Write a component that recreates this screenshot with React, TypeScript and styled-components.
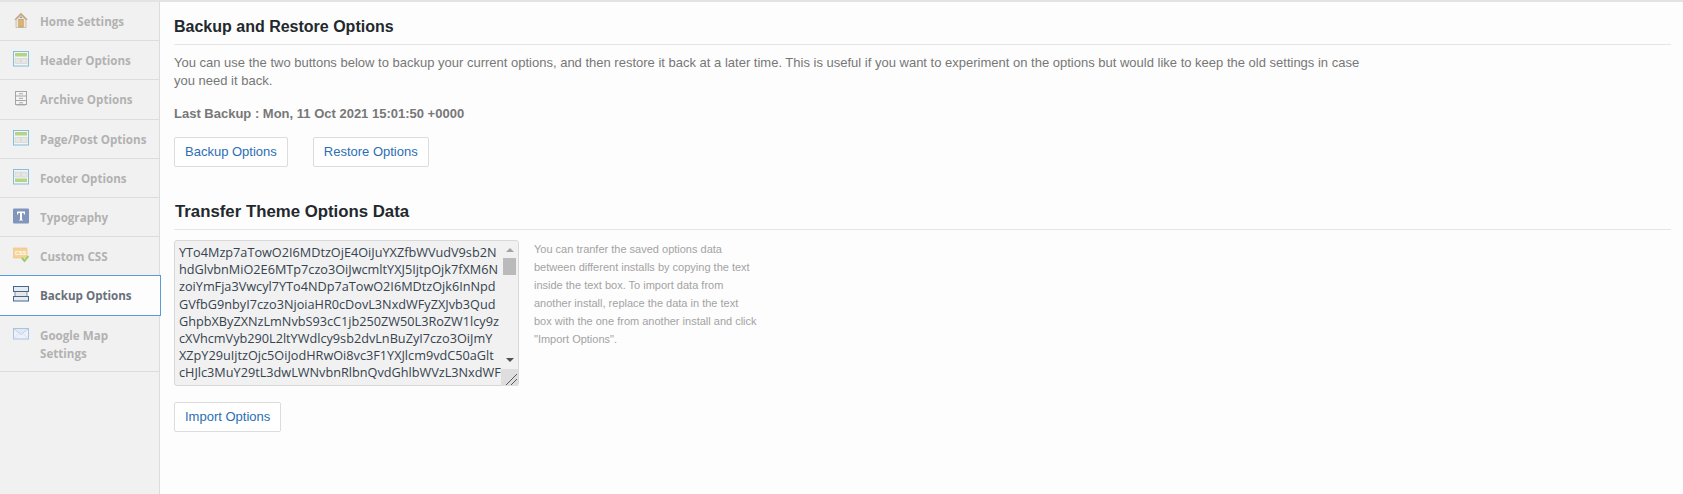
import React from "react";
import styled, { createGlobalStyle } from "styled-components";

const GlobalStyle = createGlobalStyle`
  html, body {
    margin: 0;
    padding: 0;
    background: #fdfdfd;
  }
  * {
    box-sizing: border-box;
  }
`;

const Page = styled.div`
  display: flex;
  width: 1683px;
  height: 494px;
  overflow: hidden;
  border-top: 2px solid #e3e3e3;
  font-family: "Liberation Sans", Arial, sans-serif;
`;

const Sidebar = styled.ul`
  flex: none;
  width: 160px;
  margin: 0;
  padding: 0;
  list-style: none;
  background: #f1f1f1;
  border-right: 1px solid #dcdcdc;
`;

const MenuItem = styled.li<{ $active?: boolean; $rows?: number }>`
  display: flex;
  align-items: flex-start;
  column-gap: 11px;
  min-height: ${(p) => p.$rows ?? 39}px;
  padding: 11px 0 0 13px;
  border-bottom: 1px solid #dcdcdc;
  font-family: "Open Sans", sans-serif;
  font-size: 11.6px;
  font-weight: 700;
  line-height: 18px;
  color: #b2b2b2;
  ${(p) =>
    p.$active &&
    `
    position: relative;
    width: 161px;
    margin-top: -1px;
    background: #fdfdfd;
    border: 1px solid #5b9bd5;
    border-left: 0;
    color: #69707c;
  `}
`;

const MenuIcon = styled.svg`
  flex: none;
  width: 16px;
  height: 16px;
  margin-top: -1px;
`;

const MenuLabel = styled.span`
  display: block;
  width: 116px;
`;

const Content = styled.main`
  flex: 1;
  padding: 15px 12px 0 14px;
`;

const SectionTitle = styled.h3`
  margin: 0;
  padding-bottom: 7px;
  border-bottom: 1px solid #e6e6e6;
  font-size: 16px;
  font-weight: 700;
  line-height: 20px;
  color: #23282d;
`;

const Intro = styled.p`
  width: 1205px;
  margin: 9px 0 0;
  font-size: 13px;
  line-height: 18px;
  color: #777;
`;

const LastBackup = styled.p`
  margin: 15px 0 0;
  font-size: 13px;
  font-weight: 700;
  line-height: 18px;
  color: #777;
`;

const ButtonRow = styled.div`
  display: flex;
  column-gap: 25px;
  margin-top: 14px;
`;

const ActionButton = styled.button`
  height: 30px;
  padding: 0 10px 2px;
  background: #fff;
  border: 1px solid #dcdcdc;
  border-radius: 2px;
  font-family: "Liberation Sans", Arial, sans-serif;
  font-size: 13px;
  color: #2b6eb4;
`;

const TransferTitle = styled(SectionTitle)`
  margin: 35px 0 0;
  padding-left: 1px;
  font-size: 16.8px;
`;

const TransferRow = styled.div`
  display: flex;
  column-gap: 15px;
  margin-top: 10px;
`;

const DataField = styled.div`
  position: relative;
  flex: none;
  width: 345px;
  height: 146px;
`;

const DataBox = styled.textarea`
  display: block;
  width: 100%;
  height: 100%;
  padding: 3px 4px 0;
  overflow: hidden;
  resize: none;
  white-space: pre;
  background: #f1f1f1;
  border: 1px solid #d8d8d8;
  border-radius: 3px;
  outline: none;
  font-family: "Open Sans", sans-serif;
  font-size: 12.7px;
  line-height: 17.2px;
  color: #35434f;
`;

const ScrollBar = styled.div`
  position: absolute;
  top: 1px;
  right: 1px;
  bottom: 1px;
  display: flex;
  flex-direction: column;
  align-items: center;
  width: 17px;
  background: #f1f1f1;
  border-radius: 0 2px 2px 0;
`;

const ArrowUp = styled.span`
  flex: none;
  margin-top: 7px;
  border-style: solid;
  border-width: 0 4px 4px;
  border-color: transparent transparent #a3a3a3;
`;

const Thumb = styled.span`
  flex: none;
  width: 13px;
  height: 17px;
  margin-top: 6px;
  background: #bababa;
`;

const ArrowDown = styled.span`
  flex: none;
  margin-top: 83px;
  border-style: solid;
  border-width: 4px 4px 0;
  border-color: #505050 transparent transparent;
`;

const ResizeCorner = styled.span`
  display: flex;
  flex: none;
  align-items: flex-end;
  justify-content: flex-end;
  width: 17px;
  height: 17px;
  margin-top: 7px;
  background: #dedede;
`;

const HelpText = styled.p`
  width: 224px;
  margin: 0;
  font-size: 11px;
  line-height: 18px;
  color: #a3a3a3;
`;

const ImportRow = styled.div`
  display: flex;
  margin-top: 16px;
`;

const exportedOptions = [
  "YTo4Mzp7aTowO2I6MDtzOjE4OiJuYXZfbWVudV9sb2N",
  "hdGlvbnMiO2E6MTp7czo3OiJwcmltYXJ5IjtpOjk7fXM6N",
  "zoiYmFja3Vwcyl7YTo4NDp7aTowO2I6MDtzOjk6InNpd",
  "GVfbG9nbyI7czo3NjoiaHR0cDovL3NxdWFyZXJvb3Qud",
  "GhpbXByZXNzLmNvbS93cC1jb250ZW50L3RoZW1lcy9z",
  "cXVhcmVyb290L2ltYWdlcy9sb2dvLnBuZyI7czo3OiJmY",
  "XZpY29uIjtzOjc5OiJodHRwOi8vc3F1YXJlcm9vdC50aGlt",
  "cHJlc3MuY29tL3dwLWNvbnRlbnQvdGhlbWVzL3NxdWF",
  "yZXJvb3QvaW1hZ2VzL2Zhdmljb24ucG5nIjtzOjk6ImZvb",
].join("\n");

const HomeIcon = () => (
  <MenuIcon viewBox="0 0 16 16">
    <path d="M3 15.500V8L8 3.200 13 8v7.500z" fill="#efe6d6" stroke="#bfb7aa" strokeWidth=".8" />
    <path d="M8 .8 1.500 7.200l.8 1L8 3l5.700 5.200.8-1z" fill="#c8a67a" />
    <rect x="5.800" y="7.500" width="4.400" height="7.500" fill="#dcb478" stroke="#b98f55" strokeWidth=".6" />
    <circle cx="8" cy="5.300" r=".9" fill="#5b8fc7" />
  </MenuIcon>
);

const LayoutIcon = ({ footer }: { footer?: boolean }) => (
  <MenuIcon viewBox="0 0 16 16">
    <rect x=".5" y=".5" width="15" height="14.500" fill="#f4f6f2" stroke="#86bcdc" />
    <rect x="2" y={footer ? 9.500 : 2} width="12" height="3.500" fill="#b4d488" />
    <rect x="2" y={footer ? 3 : 7.500} width="5.500" height="5" fill="#e6e6e6" stroke="#cfcfcf" strokeWidth=".6" />
    <rect x="8.500" y={footer ? 3 : 7.500} width="5.500" height="5" fill="#e6e6e6" stroke="#cfcfcf" strokeWidth=".6" />
  </MenuIcon>
);

const ArchiveIcon = () => (
  <MenuIcon viewBox="0 0 16 16">
    <rect x="2.500" y="1.500" width="11" height="13" fill="#f4f4f4" stroke="#a5a5a5" />
    <path d="M3 6h10M3 10.500h10" stroke="#a5a5a5" />
    <path d="M6 3.800h4M6 8.300h4M6 12.800h4" stroke="#a5a5a5" />
    <path d="M3.500 15.500h9" stroke="#d0d0d0" />
  </MenuIcon>
);

const TypeIcon = () => (
  <MenuIcon viewBox="0 0 16 16">
    <rect y=".5" width="16" height="15" rx="1" fill="#8295bd" />
    <path d="M4 3.500h8v3h-1l-.5-1.500H9v6.500l1 .5v.5H6V12l1-.5V5H5.500L5 6.500H4z" fill="#fff" />
  </MenuIcon>
);

const CssIcon = () => (
  <MenuIcon viewBox="0 0 16 16">
    <rect y="1" width="14" height="10" fill="#f5d295" stroke="#eec47f" strokeWidth=".6" />
    <text x="2" y="8.300" fontSize="5.500" fontWeight="700" fontFamily="Liberation Sans" fill="#fff">CSS</text>
    <path d="m9 11 2.500 3 4-5" fill="none" stroke="#9ccb6c" strokeWidth="2" />
  </MenuIcon>
);

const BackupIcon = () => (
  <MenuIcon viewBox="0 0 16 16">
    <rect x="2" y="5" width="12" height="6" fill="#e6e6e6" stroke="#8090a4" />
    <rect x=".5" y=".5" width="15" height="5" fill="#e3ebf3" stroke="#47668a" />
    <rect x=".5" y="10.500" width="15" height="4.500" fill="#e3ebf3" stroke="#47668a" />
  </MenuIcon>
);

const MailIcon = () => (
  <MenuIcon viewBox="0 0 16 16">
    <rect x=".5" y="2.500" width="15" height="10.500" fill="#eef2f8" stroke="#a9c3e4" />
    <path d="m1 3 7 5.500L15 3" fill="#dfe8f4" stroke="#c0d2ea" />
    <path d="m1 12.500 5-5M15 12.500l-5-5" fill="none" stroke="#d3e0f0" />
  </MenuIcon>
);

const ResizeGrip = () => (
  <svg width="13" height="13" viewBox="0 0 13 13">
    <path d="M1 12 12 1M6 12l6-6" stroke="#5a5a5a" />
  </svg>
);

const App: React.FC = () => {
  return (
    <>
      <GlobalStyle />
      <Page>
        <Sidebar>
          <MenuItem><HomeIcon /><MenuLabel>Home Settings</MenuLabel></MenuItem>
          <MenuItem><LayoutIcon /><MenuLabel>Header Options</MenuLabel></MenuItem>
          <MenuItem $rows={40}><ArchiveIcon /><MenuLabel>Archive Options</MenuLabel></MenuItem>
          <MenuItem><LayoutIcon /><MenuLabel>Page/Post Options</MenuLabel></MenuItem>
          <MenuItem><LayoutIcon footer /><MenuLabel>Footer Options</MenuLabel></MenuItem>
          <MenuItem><TypeIcon /><MenuLabel>Typography</MenuLabel></MenuItem>
          <MenuItem><CssIcon /><MenuLabel>Custom CSS</MenuLabel></MenuItem>
          <MenuItem $active $rows={41}><BackupIcon /><MenuLabel>Backup Options</MenuLabel></MenuItem>
          <MenuItem $rows={56}><MailIcon /><MenuLabel>Google Map<br />Settings</MenuLabel></MenuItem>
        </Sidebar>
        <Content>
          <SectionTitle>Backup and Restore Options</SectionTitle>
          <Intro>
            You can use the two buttons below to backup your current options, and then restore it back at a later time.
            This is useful if you want to experiment on the options but would like to keep the old settings in case you
            need it back.
          </Intro>
          <LastBackup>Last Backup : Mon, 11 Oct 2021 15:01:50 +0000</LastBackup>
          <ButtonRow>
            <ActionButton>Backup Options</ActionButton>
            <ActionButton>Restore Options</ActionButton>
          </ButtonRow>
          <TransferTitle>Transfer Theme Options Data</TransferTitle>
          <TransferRow>
            <DataField>
              <DataBox readOnly defaultValue={exportedOptions} />
              <ScrollBar>
                <ArrowUp />
                <Thumb />
                <ArrowDown />
                <ResizeCorner><ResizeGrip /></ResizeCorner>
              </ScrollBar>
            </DataField>
            <HelpText>
              You can tranfer the saved options data between different installs by copying the text inside the text box.
              To import data from another install, replace the data in the text box with the one from another install
              and click "Import Options".
            </HelpText>
          </TransferRow>
          <ImportRow>
            <ActionButton>Import Options</ActionButton>
          </ImportRow>
        </Content>
      </Page>
    </>
  );
};

export default App;
